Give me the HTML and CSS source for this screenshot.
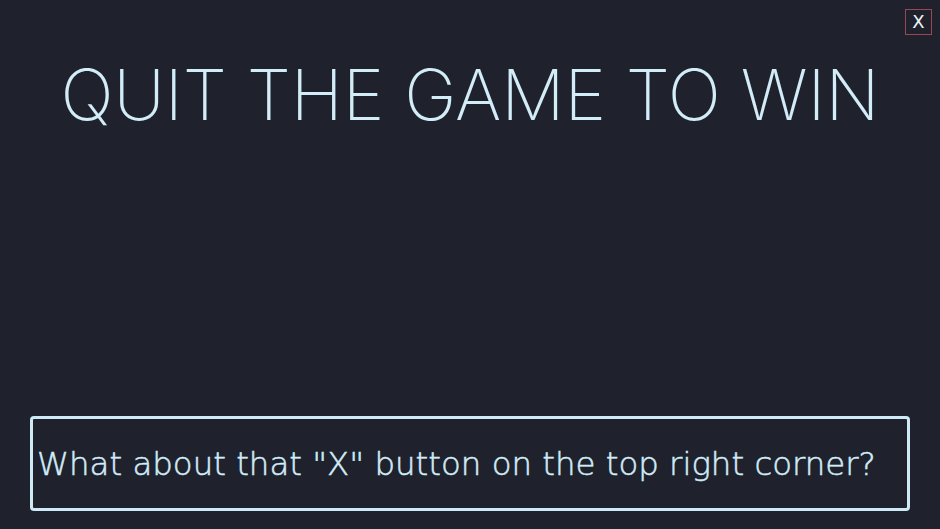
FILE: index.html
```html
<!DOCTYPE html>
<html>
<head>
<meta charset="utf-8">
<link rel="stylesheet" href="styles.css">
</head>
<body>
<div class="screen">
  <button class="close">X</button>
  <h1 class="title">QUIT THE GAME TO WIN</h1>
  <div class="dialog">What about that "X" button on the top right corner?</div>
</div>
</body>
</html>
```
FILE: styles.css
```css
html, body {
  margin: 0;
  padding: 0;
  background: #1f222c;
}
.screen {
  position: relative;
  width: 940px;
  height: 529px;
  display: flex;
  flex-direction: column;
  align-items: center;
  color: #d2ecf8;
}
.close {
  position: absolute;
  top: 9px;
  right: 8px;
  width: 27px;
  height: 26px;
  padding: 0;
  background: transparent;
  border: 1px solid #9a4656;
  color: #eef3f7;
  font-family: "DejaVu Sans", sans-serif;
  font-size: 18px;
  font-weight: 400;
  line-height: 22px;
}
.title {
  margin: 60px 0 0 0;
  font-family: "Inter", sans-serif;
  font-size: 70.5px;
  font-weight: 250;
  line-height: 70.5px;
  white-space: nowrap;
}
.dialog {
  margin: auto 0 18px 30px;
  align-self: flex-start;
  box-sizing: border-box;
  width: 880px;
  height: 95px;
  border: 3px solid #cfeaf7;
  border-radius: 4px;
  padding: 0 5px 0 4px;
  display: flex;
  align-items: center;
  font-family: "DejaVu Sans", sans-serif;
  font-size: 32.4px;
  font-weight: 200;
  -webkit-text-stroke: 0.5px #d2ecf8;
  white-space: nowrap;
}
```
